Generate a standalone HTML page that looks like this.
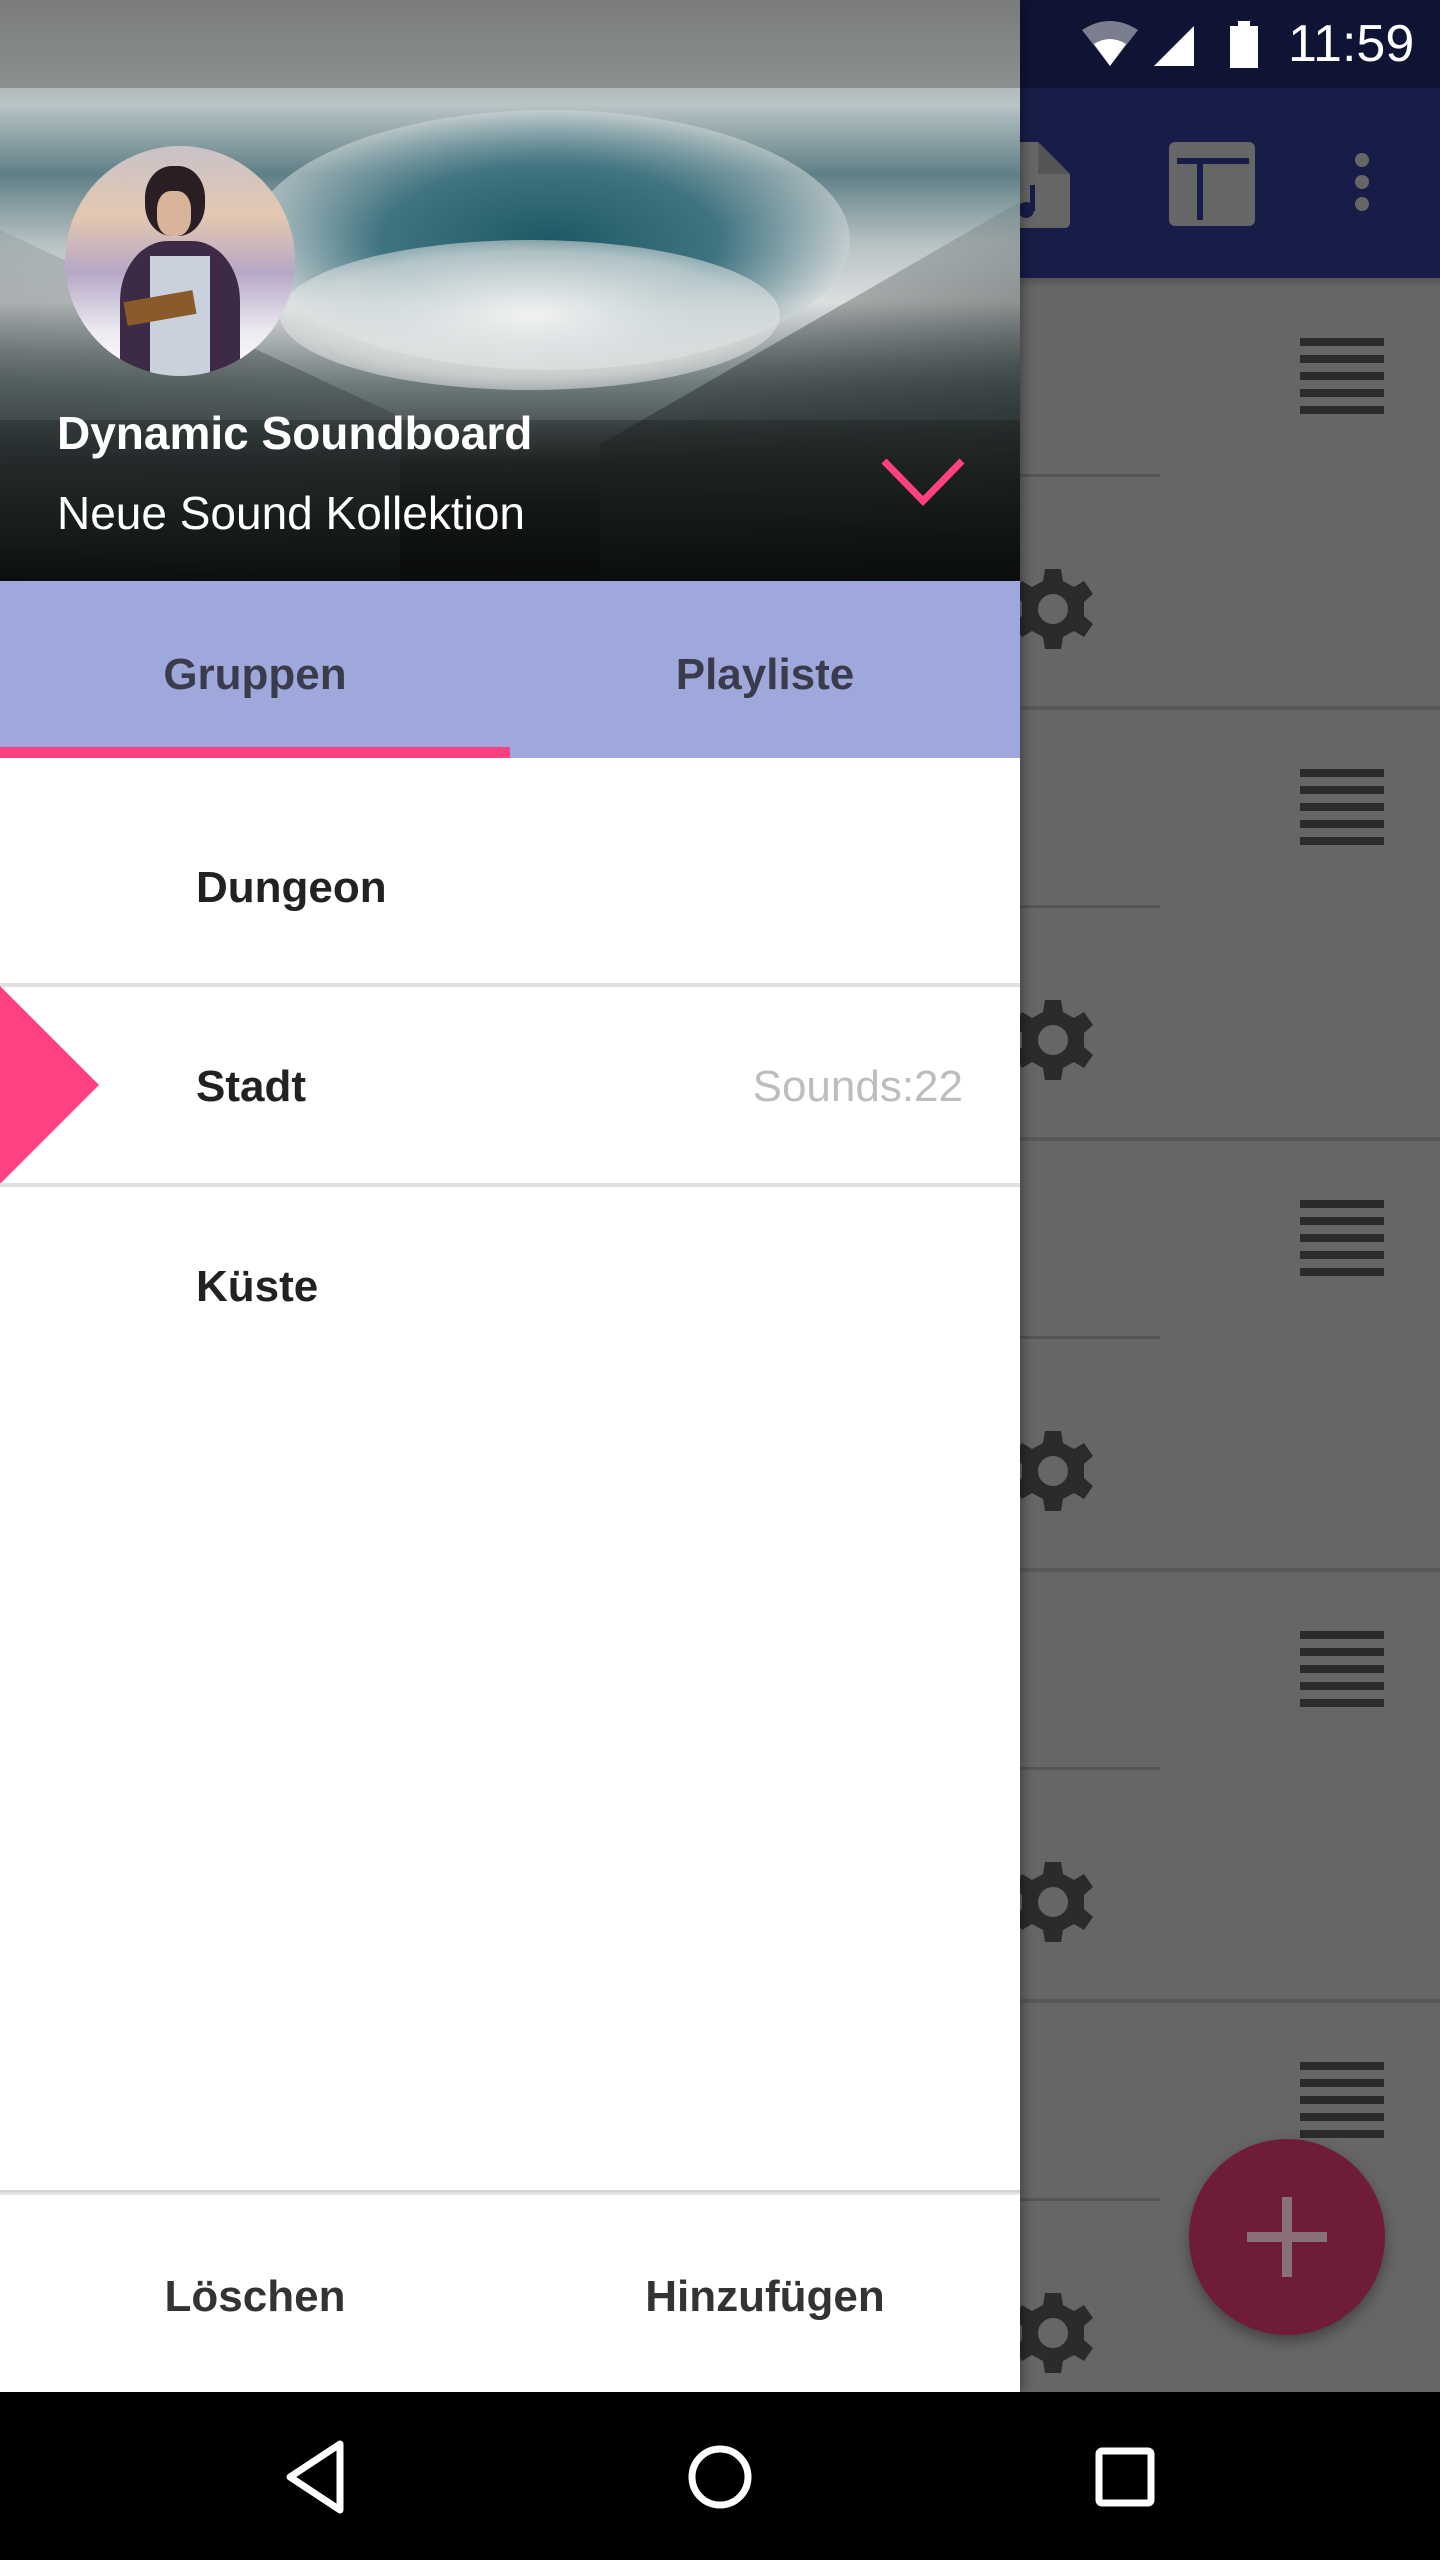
<!DOCTYPE html>
<html><head><meta charset="utf-8"><style>
*{margin:0;padding:0;box-sizing:border-box}
body{width:1440px;height:2560px;position:relative;overflow:hidden;background:#666;font-family:"Roboto","Liberation Sans",sans-serif}
.abs{position:absolute}
.t{font-family:"Liberation Sans",sans-serif}
</style></head><body>
<!-- right background -->
<div class="abs" style="left:1020px;top:0;width:420px;height:88px;background:#0f1434"></div>
<div class="abs" style="left:1020px;top:88px;width:420px;height:190px;background:#171d48"></div>
<div class="abs" style="left:1020px;top:278px;width:420px;height:10px;background:linear-gradient(#555,#666)"></div>
<!-- status icons -->
<svg class="abs" style="left:1080px;top:18px" width="340" height="52">
<path d="M2 12 Q30 -6 58 12 L30 48 Z" fill="#fff" opacity="0.45"/>
<path d="M14 26 Q30 16 46 26 L30 48 Z" fill="#fff"/>
<path d="M74 48 L114 48 L114 8 Z" fill="#fff"/>
<rect x="150" y="8" width="28" height="42" fill="#fff"/><rect x="158" y="3" width="12" height="6" fill="#fff"/>
</svg>
<div class="abs t" style="left:1288px;top:14px;font-size:52px;color:#fff">11:59</div>
<!-- toolbar icons -->
<svg class="abs" style="left:1020px;top:130px" width="420" height="110">
<path d="M0 12 L18 12 L50 44 L50 92 Q50 98 44 98 L0 98 Z" fill="#666"/>
<path d="M18 12 L18 44 L50 44" fill="#555"/>
<circle cx="6" cy="80" r="8" fill="#171d48"/><rect x="10" y="55" width="5" height="26" fill="#171d48"/>
<rect x="149" y="12" width="86" height="84" rx="6" fill="#666"/>
<rect x="157" y="28" width="72" height="6" fill="#171d48"/><rect x="177" y="28" width="6" height="62" fill="#171d48"/>
<circle cx="342" cy="30" r="7" fill="#666"/><circle cx="342" cy="52" r="7" fill="#666"/><circle cx="342" cy="74" r="7" fill="#666"/>
</svg>
<!-- cards -->
<svg class="abs" style="left:1020px;top:278px" width="420" height="2114">
<defs>
<g id="card">
<rect x="280" y="60" width="84" height="8" fill="#2b2b2b"/><rect x="280" y="77" width="84" height="8" fill="#2b2b2b"/><rect x="280" y="94" width="84" height="8" fill="#2b2b2b"/><rect x="280" y="111" width="84" height="8" fill="#2b2b2b"/><rect x="280" y="128" width="84" height="8" fill="#2b2b2b"/>
<rect x="0" y="196" width="140" height="3" fill="#555"/>
<g transform="translate(33,331)">
<path d="M-8 -40 L8 -40 L10 -28 L21 -22 L31 -28 L40 -15 L31 -7 L31 7 L40 15 L31 28 L21 22 L10 28 L8 40 L-8 40 L-10 28 L-21 22 L-31 28 L-40 15 L-31 7 L-31 -7 L-40 -15 L-31 -28 L-21 -22 L-10 -28 Z" fill="#2b2b2b"/>
<circle r="15" fill="#666"/></g>
<rect x="0" y="428" width="420" height="4" fill="#585858"/>
</g></defs>
<use href="#card" y="0"/><use href="#card" y="431"/><use href="#card" y="862"/><use href="#card" y="1293"/><use href="#card" y="1724"/>
</svg>
<!-- FAB -->
<div class="abs" style="left:1189px;top:2139px;width:196px;height:196px;border-radius:50%;background:#6e1c3a;box-shadow:0 6px 14px rgba(0,0,0,.35)"></div>
<div class="abs" style="left:1247px;top:2232px;width:80px;height:10px;background:#8a7078"></div>
<div class="abs" style="left:1282px;top:2197px;width:10px;height:80px;background:#8a7078"></div>

<!-- drawer -->
<div class="abs" style="left:0;top:0;width:1020px;height:2392px;background:#fff;box-shadow:4px 0 10px rgba(0,0,0,.3)"></div>
<!-- header image approximation -->
<div class="abs" style="left:0;top:0;width:1020px;height:581px;overflow:hidden;background:linear-gradient(180deg,#8a8c8c 0%,#b9c4c6 18%,#5f7f86 30%,#b8c2c4 42%,#dcdedf 52%,#6f7b7c 66%,#2e3434 80%,#151717 100%)">
<div class="abs" style="left:250px;top:110px;width:600px;height:260px;border-radius:50%;background:radial-gradient(ellipse,#1f5965 0%,#3f7480 40%,rgba(200,210,212,.6) 70%,transparent 100%)"></div>
<div class="abs" style="left:280px;top:240px;width:500px;height:150px;border-radius:50%;background:radial-gradient(ellipse,#f2f2f2 0%,rgba(230,232,232,.7) 60%,transparent 100%)"></div>
<div class="abs" style="left:-100px;top:300px;width:500px;height:400px;background:linear-gradient(160deg,transparent,#3a4445 60%,#1a1d1d);transform:skewY(25deg)"></div>
<div class="abs" style="left:600px;top:300px;width:500px;height:400px;background:linear-gradient(200deg,transparent,#2a3232 50%,#121414);transform:skewY(-30deg)"></div>
<div class="abs" style="left:0;top:420px;width:1020px;height:161px;background:linear-gradient(rgba(20,22,22,.3),rgba(10,12,12,.95))"></div>
<div class="abs" style="left:0;top:0;width:1020px;height:88px;background:rgba(110,110,110,.55)"></div>
</div>
<!-- avatar -->
<div class="abs" style="left:65px;top:146px;width:230px;height:230px;border-radius:50%;overflow:hidden;background:linear-gradient(180deg,#c9c2c8 0%,#e3c8b0 30%,#b7a7c7 55%,#ece9f0 80%,#fff 100%)">
<div class="abs" style="left:80px;top:20px;width:60px;height:70px;border-radius:45%;background:#2a1d24"></div>
<div class="abs" style="left:92px;top:45px;width:34px;height:45px;border-radius:40%;background:#d9b49a"></div>
<div class="abs" style="left:55px;top:95px;width:120px;height:150px;border-radius:40% 40% 0 0;background:#3d2b46"></div>
<div class="abs" style="left:85px;top:110px;width:60px;height:130px;background:#c9d2dc"></div>
<div class="abs" style="left:60px;top:150px;width:70px;height:24px;background:#8a5a2a;transform:rotate(-10deg)"></div>
</div>
<div class="abs t" style="left:57px;top:406px;font-size:46px;font-weight:bold;color:#fff">Dynamic Soundboard</div>
<div class="abs t" style="left:57px;top:486px;font-size:46px;color:#fff">Neue Sound Kollektion</div>
<svg class="abs" style="left:880px;top:457px" width="86" height="52"><path d="M4 4 L43 44 L82 4" stroke="#ff4081" stroke-width="7" fill="none"/></svg>
<!-- tabs -->
<div class="abs" style="left:0;top:581px;width:1020px;height:177px;background:#9fa8da"></div>
<div class="abs t" style="left:0;top:650px;width:510px;text-align:center;font-size:44px;font-weight:bold;color:#3b3b4e">Gruppen</div>
<div class="abs t" style="left:510px;top:650px;width:510px;text-align:center;font-size:44px;font-weight:bold;color:#3b3b4e">Playliste</div>
<div class="abs" style="left:0;top:747px;width:510px;height:11px;background:#ff4081"></div>
<!-- rows -->
<div class="abs t" style="left:196px;top:863px;font-size:44px;font-weight:bold;color:#222">Dungeon</div>
<div class="abs" style="left:0;top:983px;width:1020px;height:4px;background:#e0e0e0"></div>
<svg class="abs" style="left:0;top:986px" width="100" height="198"><path d="M0 0 L99 99 L0 198 Z" fill="#ff4081"/></svg>
<div class="abs t" style="left:196px;top:1062px;font-size:44px;font-weight:bold;color:#222">Stadt</div>
<div class="abs t" style="left:620px;top:1062px;width:343px;text-align:right;font-size:44px;color:#bdbdbd">Sounds:22</div>
<div class="abs" style="left:0;top:1183px;width:1020px;height:4px;background:#e0e0e0"></div>
<div class="abs t" style="left:196px;top:1262px;font-size:44px;font-weight:bold;color:#222">Küste</div>
<!-- bottom -->
<div class="abs" style="left:0;top:2190px;width:1020px;height:5px;background:linear-gradient(#ccc,#eee)"></div>
<div class="abs t" style="left:0;top:2272px;width:510px;text-align:center;font-size:44px;font-weight:bold;color:#333">Löschen</div>
<div class="abs t" style="left:510px;top:2272px;width:510px;text-align:center;font-size:44px;font-weight:bold;color:#333">Hinzufügen</div>
<!-- nav bar -->
<div class="abs" style="left:0;top:2392px;width:1440px;height:168px;background:#000"></div>
<svg class="abs" style="left:0;top:2392px" width="1440" height="168">
<path d="M340 52 L290 85 L340 118 Z" stroke="#fff" stroke-width="7" fill="none" stroke-linejoin="round"/>
<circle cx="720" cy="85" r="28" stroke="#fff" stroke-width="7" fill="none"/>
<rect x="1099" y="59" width="52" height="52" rx="3" stroke="#fff" stroke-width="7" fill="none"/>
</svg>
</body></html>
